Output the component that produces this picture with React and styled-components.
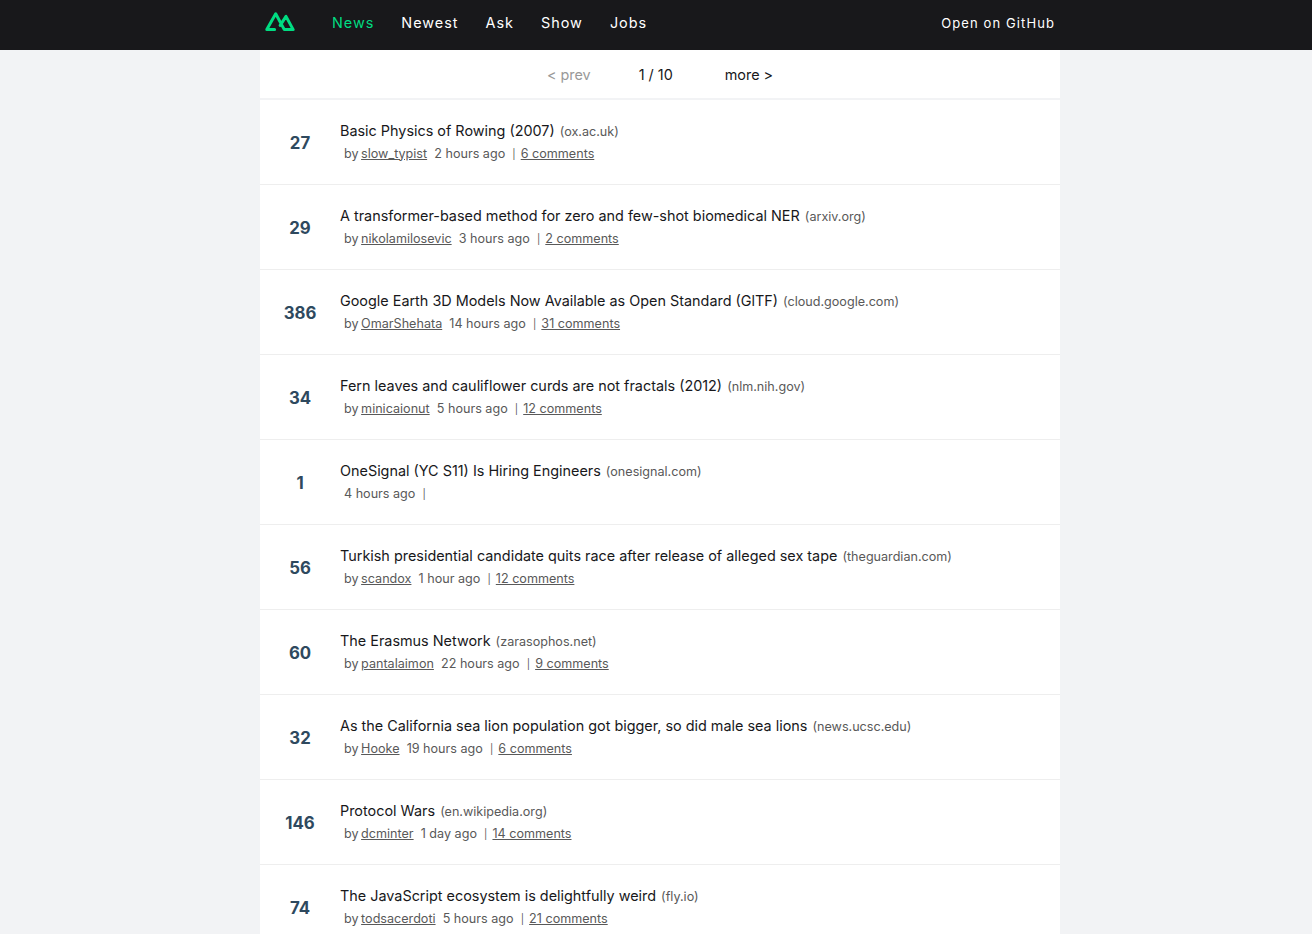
import React from "react";
import styled, { createGlobalStyle } from "styled-components";

const Global = createGlobalStyle`
  html, body { margin: 0; padding: 0; background: #f2f3f5; overflow: hidden; }
  body { font-family: Inter, "Liberation Sans", sans-serif; color: #18181b; height: 934px; }
  #root { width: 1320px; }
`;

const Header = styled.header`
  height: 50px;
  background: #18181b;
`;
const HeaderInner = styled.nav`
  width: 800px;
  height: 50px;
  margin: 0 auto;
  display: flex;
  align-items: center;
  padding: 0 5px;
  box-sizing: border-box;
`;
const Logo = styled.svg`
  width: 30px;
  height: 20px;
  margin-right: 37px;
  margin-top: -6px;
  flex: none;
`;
const NavLink = styled.a`
  font-size: 14.4px;
  font-weight: 400;
  letter-spacing: 1px;
  line-height: 20px;
  color: ${(p) => (p.$active ? "#00dc82" : "#fff")};
  margin-right: 27px;
  margin-top: -4px;
`;
const GitHub = styled.a`
  margin-left: auto;
  font-size: 13px;
  letter-spacing: 1.1px;
  line-height: 20px;
  color: #fff;
  margin-top: -5px;
`;
const Main = styled.main`
  width: 800px;
  margin: 0 auto;
`;
const Pager = styled.div`
  height: 48px;
  background: #fff;
  margin-bottom: 2px;
  display: flex;
  justify-content: center;
  align-items: center;
`;
const PageLink = styled.a`
  color: ${(p) => (p.$disabled ? "#999" : "#18181b")};
  font-size: 14.4px;
  line-height: 50px;
  margin-top: 1px;
`;
const PageCount = styled.span`
  font-size: 14.4px;
  margin: 1px 52px 0 48px;
`;
const List = styled.ul`
  list-style: none;
  margin: 0;
  padding: 0;
  background: #fff;
`;
const Item = styled.li`
  height: 85px;
  box-sizing: border-box;
  border-bottom: 1px solid #eee;
  display: flex;
  align-items: center;
`;
const Score = styled.span`
  width: 80px;
  flex: none;
  text-align: center;
  font-size: 16.8px;
  line-height: 22px;
  padding-top: 1px;
  font-weight: 700;
  color: #2e495e;
`;
const Body = styled.div`
  display: flex;
  flex-direction: column;
`;
const Title = styled.div`
  font-size: 14.4px;
  line-height: 22px;
  color: #18181b;
`;
const Host = styled.span`
  font-size: 12.6px;
  color: #595959;
  margin-left: 5px;
`;
const Meta = styled.div`
  font-size: 12.6px;
  line-height: 22px;
  color: #595959;
  padding-left: 4px;
  white-space: pre;
`;
const Under = styled.a`
  text-decoration: underline;
  color: #595959;
`;
const Author = styled(Under)`
  margin-left: -1px;
`;
const Sep = styled.span`
  font-size: 10px;
  margin: 0 -2px 0 0;
`;

const items = [
  [27, "Basic Physics of Rowing (2007)", "ox.ac.uk", "slow_typist", "2 hours ago", "6 comments"],
  [29, "A transformer-based method for zero and few-shot biomedical NER", "arxiv.org", "nikolamilosevic", "3 hours ago", "2 comments"],
  [386, "Google Earth 3D Models Now Available as Open Standard (GlTF)", "cloud.google.com", "OmarShehata", "14 hours ago", "31 comments"],
  [34, "Fern leaves and cauliflower curds are not fractals (2012)", "nlm.nih.gov", "minicaionut", "5 hours ago", "12 comments"],
  [1, "OneSignal (YC S11) Is Hiring Engineers", "onesignal.com", null, "4 hours ago", null],
  [56, "Turkish presidential candidate quits race after release of alleged sex tape", "theguardian.com", "scandox", "1 hour ago", "12 comments"],
  [60, "The Erasmus Network", "zarasophos.net", "pantalaimon", "22 hours ago", "9 comments"],
  [32, "As the California sea lion population got bigger, so did male sea lions", "news.ucsc.edu", "Hooke", "19 hours ago", "6 comments"],
  [146, "Protocol Wars", "en.wikipedia.org", "dcminter", "1 day ago", "14 comments"],
  [74, "The JavaScript ecosystem is delightfully weird", "fly.io", "todsacerdoti", "5 hours ago", "21 comments"],
];

export default function App() {
  return (
    <>
      <Global />
      <Header>
        <HeaderInner>
          <Logo viewBox="0 0 30 20" fill="none">
            <path
              d="M9.6 17.6H1.8L10.7 1.8l8.6 15.8h8.9L21 4.4l-5.8 9"
              stroke="#00dc82"
              strokeWidth="3"
              strokeLinecap="round"
              strokeLinejoin="round"
            />
          </Logo>
          <NavLink $active>News</NavLink>
          <NavLink>Newest</NavLink>
          <NavLink>Ask</NavLink>
          <NavLink>Show</NavLink>
          <NavLink>Jobs</NavLink>
          <GitHub>Open on GitHub</GitHub>
        </HeaderInner>
      </Header>
      <Main>
        <Pager>
          <PageLink $disabled>&lt; prev</PageLink>
          <PageCount>1 / 10</PageCount>
          <PageLink>more &gt;</PageLink>
        </Pager>
        <List>
          {items.map(([score, title, host, by, time, comments]) => (
            <Item key={title}>
              <Score>{score}</Score>
              <Body>
                <Title>
                  {title}
                  <Host>({host})</Host>
                </Title>
                <Meta>
                  {by ? <>by <Author>{by}</Author>{"  "}</> : null}
                  {time}{"  "}<Sep>|</Sep>{"  "}
                  {comments ? <Under>{comments}</Under> : null}
                </Meta>
              </Body>
            </Item>
          ))}
        </List>
      </Main>
    </>
  );
}
